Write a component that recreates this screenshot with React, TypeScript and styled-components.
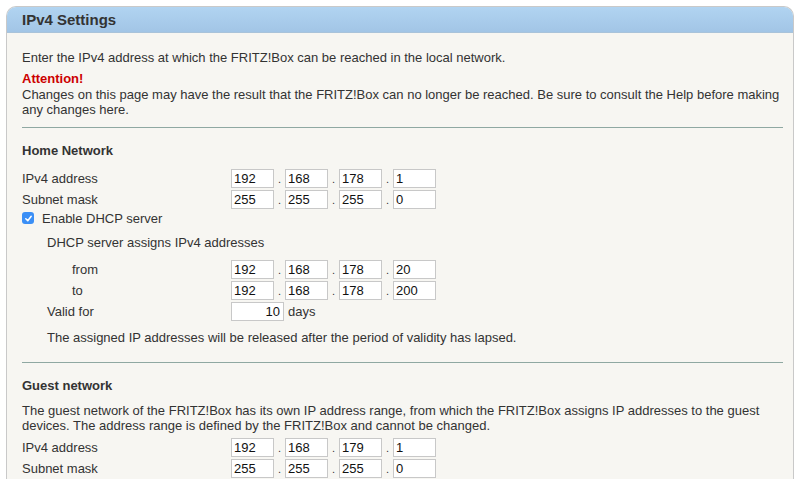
import React from "react";
import styled, { createGlobalStyle } from "styled-components";

const Global = createGlobalStyle`
  html, body { margin: 0; padding: 0; background: #ffffff; overflow: hidden; }
  body { font-family: "Liberation Sans", Arial, Helvetica, sans-serif; font-size: 13px; color: #333; }
`;

const Page = styled.div`
  padding: 6px 6px 0 6px;
  height: 485px;
  box-sizing: border-box;
  overflow: hidden;
`;

const Panel = styled.section`
  width: 788px;
  box-sizing: border-box;
  border: 1px solid #c9c9c9;
  border-bottom: none;
  border-radius: 10px 10px 0 0;
  background: #f7f6f2;
  overflow: hidden;
`;

const Header = styled.header`
  height: 26px;
  background: linear-gradient(#b1d4f1, #a2c5e6);
  border-bottom: 1px solid #a9c3da;
  box-sizing: border-box;
  padding-left: 15px;
  display: flex;
  align-items: center;
`;

const Title = styled.h1`
  margin: 1px 0 0 0;
  font-size: 15px;
  font-weight: bold;
  color: #333;
  line-height: 26px;
`;

const Body = styled.div`
  padding: 0 10px 0 15px;
`;

const Para = styled.p<{ $mt: number; $indent?: number }>`
  margin: ${(p) => p.$mt}px 0 0 0;
  line-height: 15px;
  padding-left: ${(p) => p.$indent || 0}px;
`;

const Attention = styled.p`
  margin: 6px 0 0 0;
  line-height: 15px;
  color: #cc0000;
  font-weight: bold;
`;

const Divider = styled.hr<{ $mt: number }>`
  margin: ${(p) => p.$mt}px 0 0 0;
  border: none;
  height: 1px;
  background: #8fa8a2;
`;

const SectionTitle = styled.h2`
  margin: 15px 0 0 0;
  font-size: 13px;
  font-weight: bold;
  line-height: 15px;
  color: #333;
`;

const Rows = styled.div<{ $mt: number }>`
  margin-top: ${(p) => p.$mt}px;
  display: flex;
  flex-direction: column;
`;

const Row = styled.div`
  display: grid;
  grid-template-columns: 209px auto;
  height: 21px;
  align-items: center;
`;

const Label = styled.span<{ $indent?: number }>`
  padding-left: ${(p) => p.$indent || 0}px;
  line-height: 21px;
`;

const Fields = styled.div`
  display: flex;
  align-items: center;
`;

const Box = styled.input<{ $w?: number; $right?: boolean }>`
  box-sizing: border-box;
  width: ${(p) => p.$w || 43}px;
  height: 19px;
  margin: 0;
  padding: 0 ${(p) => (p.$right ? 3 : 0)}px 0 ${(p) => (p.$right ? 0 : 2)}px;
  border: 1px solid #c8c8c8;
  background: #fff;
  font-family: "Liberation Sans", Arial, Helvetica, sans-serif;
  font-size: 13px;
  color: #111;
  text-align: ${(p) => (p.$right ? "right" : "left")};
  outline: none;
`;

const Dot = styled.span`
  width: 11px;
  text-align: center;
  font-size: 11px;
  line-height: 19px;
  padding-top: 2px;
  color: #333;
`;

const Unit = styled.span`
  margin-left: 4px;
`;

const CheckRow = styled.label`
  display: flex;
  align-items: center;
  height: 16px;
  gap: 8px;
`;

const CheckBox = styled.span`
  width: 12px;
  height: 12px;
  border-radius: 3px;
  background: #3b8ff6;
  display: inline-flex;
  align-items: center;
  justify-content: center;
`;

const IP = ({ parts }: { parts: string[] }) => (
  <Fields>
    {parts.map((v, i) => (
      <React.Fragment key={i}>
        {i > 0 && <Dot>.</Dot>}
        <Box readOnly value={v} />
      </React.Fragment>
    ))}
  </Fields>
);

export default function App() {
  return (
    <>
      <Global />
      <Page>
        <Panel>
          <Header>
            <Title>IPv4 Settings</Title>
          </Header>
          <Body>
            <Para $mt={17}>Enter the IPv4 address at which the FRITZ!Box can be reached in the local network.</Para>
            <Attention>Attention!</Attention>
            <Para $mt={1}>
              Changes on this page may have the result that the FRITZ!Box can no longer be reached. Be sure to consult the Help before making any changes here.
            </Para>
            <Divider $mt={10} />

            <SectionTitle>Home Network</SectionTitle>
            <Rows $mt={10}>
              <Row>
                <Label>IPv4 address</Label>
                <IP parts={["192", "168", "178", "1"]} />
              </Row>
              <Row>
                <Label>Subnet mask</Label>
                <IP parts={["255", "255", "255", "0"]} />
              </Row>
            </Rows>
            <CheckRow>
              <CheckBox>
                <svg width="9" height="9" viewBox="0 0 10 10">
                  <path d="M2 5.3 L4.2 7.4 L8 2.6" fill="none" stroke="#fff" strokeWidth="1.7" strokeLinecap="round" strokeLinejoin="round" />
                </svg>
              </CheckBox>
              <span>Enable DHCP server</span>
            </CheckRow>
            <Para $mt={9} $indent={25}>DHCP server assigns IPv4 addresses</Para>
            <Rows $mt={9}>
              <Row>
                <Label $indent={50}>from</Label>
                <IP parts={["192", "168", "178", "20"]} />
              </Row>
              <Row>
                <Label $indent={50}>to</Label>
                <IP parts={["192", "168", "178", "200"]} />
              </Row>
              <Row>
                <Label $indent={25}>Valid for</Label>
                <Fields>
                  <Box readOnly value="10" $w={53} $right />
                  <Unit>days</Unit>
                </Fields>
              </Row>
            </Rows>
            <Para $mt={8} $indent={25}>
              The assigned IP addresses will be released after the period of validity has lapsed.
            </Para>
            <Divider $mt={17} />

            <SectionTitle>Guest network</SectionTitle>
            <Para $mt={10}>
              The guest network of the FRITZ!Box has its own IP address range, from which the FRITZ!Box assigns IP addresses to the guest devices. The address range is defined by the FRITZ!Box and cannot be changed.
            </Para>
            <Rows $mt={4}>
              <Row>
                <Label>IPv4 address</Label>
                <IP parts={["192", "168", "179", "1"]} />
              </Row>
              <Row>
                <Label>Subnet mask</Label>
                <IP parts={["255", "255", "255", "0"]} />
              </Row>
            </Rows>
          </Body>
        </Panel>
      </Page>
    </>
  );
}
